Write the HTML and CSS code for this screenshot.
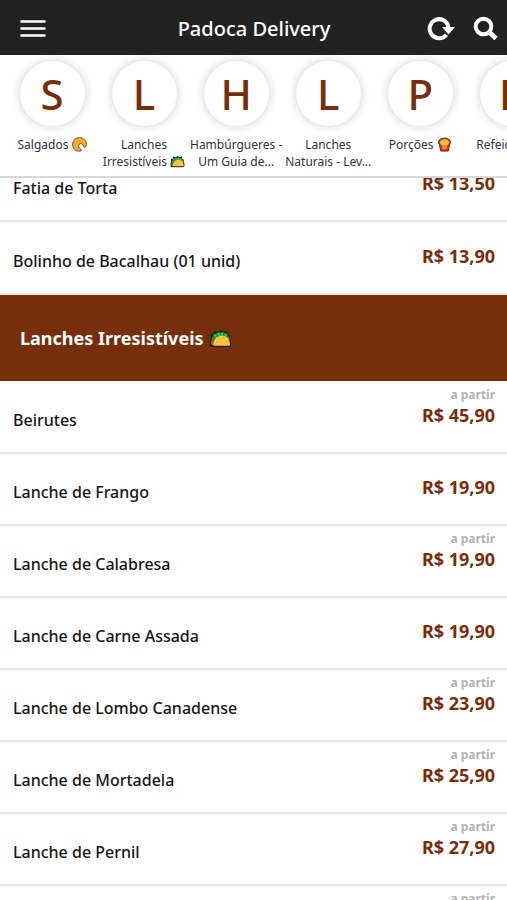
FILE: index.html
```html
<!DOCTYPE html>
<html lang="pt-BR">
<head>
<meta charset="utf-8">
<meta name="viewport" content="width=device-width, initial-scale=1">
<title>Padoca Delivery</title>
<link rel="stylesheet" href="styles.css">
</head>
<body>
<svg class="defs" aria-hidden="true">
  <symbol id="taco" viewBox="0 0 24 20">
    <path d="M1 18V12L2 8 1 6 5 5 5 2 9 3 12 1 15 3 19 2 19 5 22 7 22 10 23 13V18L21 19H3Z" fill="#10240f"/>
    <path d="M2 16C2 9 5 4 12 3.500C18 3.500 21 7 22 11L20 12H5V16Z" fill="#159447"/>
    <path d="M5 6L8 8M9 4L11 7M14 4L13 7M18 5L17 8" stroke="#55ce57" stroke-width="1.500"/>
    <path d="M2.500 17V13L5 12V17Z" fill="#c94b30"/>
    <path d="M4.500 17C4.500 11 8 7 14 7C19 7 22 11 22 17C22 18 5 18 4.500 17Z" fill="#ffc441"/>
    <path d="M10 10h1M15 9h1M18 13h1M12 14h1M8 14h1" stroke="#e69024" stroke-width="1.500"/>
  </symbol>
</svg>
<header class="topbar">
  <button class="icon-button menu" aria-label="Menu">
    <svg width="26" height="20" viewBox="0 0 26 20"><path d="M1.500 2.500h23M1.500 9.500h23M1.500 16.500h23" stroke="#fff" stroke-width="2.600" stroke-linecap="round"/></svg>
  </button>
  <h1>Padoca Delivery</h1>
  <div class="actions">
    <button class="icon-button" aria-label="Atualizar">
      <svg width="28" height="26" viewBox="0 0 28 26"><path d="M19.500 18.700A9.500 9.500 0 1 1 21.500 11" fill="none" stroke="#fff" stroke-width="4"/><path d="M15 11H28L21.500 18.500Z" fill="#fff"/></svg>
    </button>
    <button class="icon-button" aria-label="Buscar">
      <svg width="26" height="26" viewBox="0 0 26 26"><circle cx="10.500" cy="10.500" r="7.800" fill="none" stroke="#fff" stroke-width="4"/><path d="M16 16L23 22.500" stroke="#fff" stroke-width="5"/></svg>
    </button>
  </div>
</header>
<nav class="categories" aria-label="Categorias">
  <a class="category" href="#salgados"><span class="initial">S</span><span>Salgados <svg class="emoji" viewBox="0 0 16 16"><path d="M9 15C4 16 .5 12 .7 7.500C1 3 4 .7 8 .7C12.500 .7 15.500 4 15.300 8C15.200 10 14 11.500 13 11C12 10 12 7.500 10 7C8 6.800 6.500 8.500 7 10.500C7.500 12.500 9.500 12.500 10 13.500C10 14.500 9.500 15 9 15Z" fill="#f6ad2d" stroke="#6b4518"/></svg></span></a>
  <a class="category" href="#lanches"><span class="initial">L</span><span>Lanches<br>Irresistíveis <svg class="emoji" viewBox="0 0 24 20"><use href="#taco"/></svg></span></a>
  <a class="category" href="#hamburgueres"><span class="initial">H</span><span>Hambúrgueres -<br>Um Guia de...</span></a>
  <a class="category" href="#naturais"><span class="initial">L</span><span>Lanches<br>Naturais - Lev...</span></a>
  <a class="category" href="#porcoes"><span class="initial">P</span><span>Porções <svg class="emoji" viewBox="0 0 16 16"><path d="M2.500 8L1.500 5 3 2.500 6 1.500 8 1 11 1.500 13.500 3 14.500 5.500 13.500 8 12 15H4Z" fill="#d63622" stroke="#5a2515"/><path d="M3 6L4 3.500 8 2 12 3.500 13 6 11 9H5Z" fill="#ffbd36"/><path d="M5 9h6L10 13H6Z" fill="#f78b2c"/></svg></span></a>
  <a class="category" href="#refeicoes"><span class="initial">R</span><span>Refeições <svg class="emoji" viewBox="0 0 16 16"><path d="M1 8h14a7 7 0 0 1-14 0Z" fill="#d63622"/></svg></span></a>
</nav>
<main>
  <ul class="products" id="salgados">
    <li><span class="name">Fatia de Torta</span><span class="cost"><small></small><b>R$ 13,50</b></span></li>
    <li><span class="name">Bolinho de Bacalhau (01 unid)</span><span class="cost"><small></small><b>R$ 13,90</b></span></li>
  </ul>
  <h2 id="lanches">Lanches Irresistíveis <svg class="taco" viewBox="0 0 24 20"><use href="#taco"/></svg></h2>
  <ul class="products">
    <li><span class="name">Beirutes</span><span class="cost"><small>a partir</small><b>R$ 45,90</b></span></li>
    <li><span class="name">Lanche de Frango</span><span class="cost"><small></small><b>R$ 19,90</b></span></li>
    <li><span class="name">Lanche de Calabresa</span><span class="cost"><small>a partir</small><b>R$ 19,90</b></span></li>
    <li><span class="name">Lanche de Carne Assada</span><span class="cost"><small></small><b>R$ 19,90</b></span></li>
    <li><span class="name">Lanche de Lombo Canadense</span><span class="cost"><small>a partir</small><b>R$ 23,90</b></span></li>
    <li><span class="name">Lanche de Mortadela</span><span class="cost"><small>a partir</small><b>R$ 25,90</b></span></li>
    <li><span class="name">Lanche de Pernil</span><span class="cost"><small>a partir</small><b>R$ 27,90</b></span></li>
    <li><span class="name"></span><span class="cost"><small>a partir</small></span></li>
  </ul>
</main>
</body>
</html>
```

FILE: styles.css
```css
* { box-sizing: border-box; }
body {
  margin: 0;
  height: 100vh;
  display: flex;
  flex-direction: column;
  overflow: hidden;
  background: #fff;
  color: #161616;
  font-family: "Noto Sans", "Open Sans", sans-serif;
}
.defs { display: none; }
.topbar {
  flex: none;
  display: grid;
  grid-template-columns: 1fr auto 1fr;
  align-items: center;
  padding: 2px 8px 0 20px;
  height: 55px;
  background: #222;
  color: #fff;
}
h1 { margin: 0; padding: 0 11px 0 0; font-size: 20px; line-height: 28px; font-weight: 500; }
.icon-button { display: block; padding: 0; border: 0; background: none; cursor: pointer; }
.icon-button svg { display: block; }
.menu { justify-self: start; }
.actions { display: flex; justify-content: flex-end; gap: 18px; }
.categories {
  flex: none;
  display: flex;
  position: relative;
  z-index: 1;
  height: 123px;
  padding: 6px 0 0 6px;
  overflow: hidden;
  background: #fff;
  border-bottom: 2px solid #d8d8d8;
}
.category {
  flex: 0 0 92px;
  display: flex;
  flex-direction: column;
  align-items: center;
  gap: 10px;
  color: #333;
  font-size: 12px;
  line-height: 17px;
  text-align: center;
  text-decoration: none;
  white-space: nowrap;
}
.initial {
  display: flex;
  align-items: center;
  justify-content: center;
  width: 65px;
  height: 65px;
  flex: none;
  border-radius: 50%;
  background: #fff;
  box-shadow: 0 0 10px rgba(0, 0, 0, .2);
  color: #762e0b;
  font-size: 42px;
  line-height: 64px;
  font-weight: 500;
}
.emoji { width: 15px; height: 15px; vertical-align: -3px; }
main { flex: 1; min-height: 0; overflow: hidden; }
.products { list-style: none; margin: 0; padding: 1px 0 0; }
#salgados { margin-top: -30px; }
.products li {
  display: flex;
  justify-content: space-between;
  height: 72px;
  padding: 4px 12px 0 13px;
  border-bottom: 2px solid #e8e8e8;
}
#salgados li { height: 73px; padding-top: 5px; }
.name { padding-top: 22px; font-size: 16px; line-height: 24px; font-weight: 500; }
.cost { display: flex; flex-direction: column; text-align: right; }
.cost small { height: 17px; color: #b3b3b3; font-size: 12px; line-height: 18px; font-weight: 700; }
.cost b { color: #762e0b; font-size: 18px; line-height: 24px; font-weight: 700; }
h2 {
  display: flex;
  align-items: center;
  gap: 5px;
  height: 86px;
  margin: 0;
  padding: 0 20px;
  background: #762e0b;
  color: #fff;
  font-size: 18px;
  line-height: 26px;
  font-weight: 700;
}
.taco { width: 23px; height: 19px; }
```
